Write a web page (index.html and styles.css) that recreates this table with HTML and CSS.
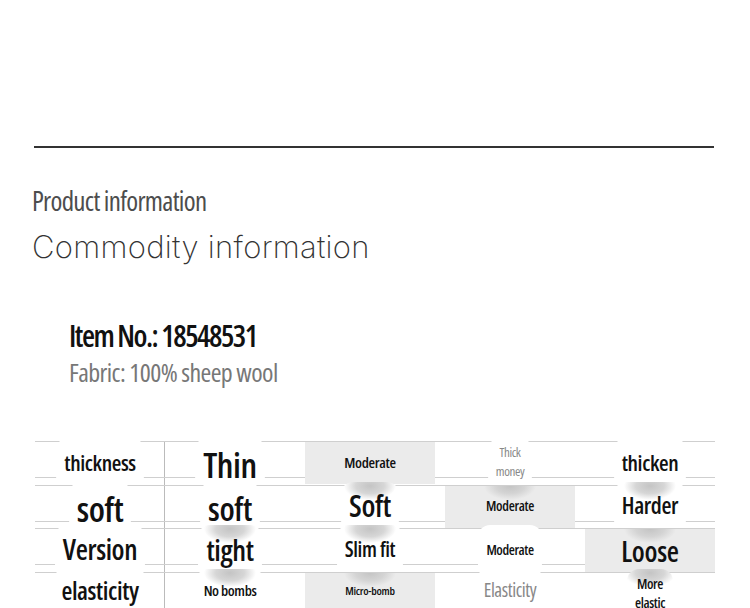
FILE: index.html
```html
<!DOCTYPE html>
<html>
<head>
<meta charset="utf-8">
<link rel="stylesheet" href="styles.css">
</head>
<body>
<div class="page">
  <div class="rule"></div>
  <div class="sub">Product information</div>
  <div class="title">Commodity information</div>
  <div class="meta">
    <div class="item">Item No.: 18548531</div>
    <div class="fabric">Fabric: 100% sheep wool</div>
  </div>
  <div class="table">
    <div class="row">
      <div class="cell"><span class="t s22">thickness</span></div>
      <div class="cell"><span class="t s35 low2">Thin</span></div>
      <div class="cell"><div class="box gray"><span class="s15">Moderate</span></div></div>
      <div class="cell"><span class="t s13 grey two">Thick<br>money</span></div>
      <div class="cell"><span class="t s22">thicken</span></div>
    </div>
    <div class="row">
      <div class="cell"><span class="t s35 low2">soft</span></div>
      <div class="cell"><span class="t s33 low2">soft</span></div>
      <div class="cell"><span class="t s30 v">Soft</span></div>
      <div class="cell"><div class="box gray v"><span class="s14">Moderate</span></div></div>
      <div class="cell"><span class="t s23 v">Harder</span></div>
    </div>
    <div class="row">
      <div class="cell"><span class="t s28">Version</span></div>
      <div class="cell"><span class="t s29 v">tight</span></div>
      <div class="cell"><span class="t s21 v">Slim fit</span></div>
      <div class="cell"><span class="t s14">Moderate</span></div>
      <div class="cell"><div class="box gray v"><span class="s28 low2">Loose</span></div></div>
    </div>
    <div class="row">
      <div class="cell"><span class="t s25">elasticity</span></div>
      <div class="cell"><span class="t s15 v">No bombs</span></div>
      <div class="cell"><div class="box gray v"><span class="s115">Micro-bomb</span></div></div>
      <div class="cell"><span class="t s19 grey">Elasticity</span></div>
      <div class="cell"><span class="t s14 two top v">More<br>elastic</span></div>
    </div>
  </div>
</div>
</body>
</html>
```

FILE: styles.css
```css
html, body {
  margin: 0;
  padding: 0;
  background: #fff;
}
.page {
  width: 750px;
  height: 608px;
  overflow: hidden;
  padding-top: 146px;
  box-sizing: border-box;
  font-family: "Open Sans", Roboto, sans-serif;
  font-stretch: 75%;
  font-weight: 500;
}
.rule {
  margin-left: 34px;
  width: 680px;
  height: 2px;
  background: #333;
}
.sub {
  margin: 38px 0 0 32px;
  font-size: 27px;
  line-height: 30px;
  color: #4d4d4d;
  font-weight: 500;
  letter-spacing: -0.7px;
}
.title {
  margin: 11px 0 0 32px;
  font-family: Inter, "Open Sans", sans-serif;
  font-stretch: 100%;
  font-weight: 250;
  font-size: 31px;
  line-height: 40px;
  color: #333;
  letter-spacing: 0.3px;
}
.meta {
  margin: 52px 0 0 69px;
}
.item {
  font-size: 30px;
  line-height: 34px;
  color: #111;
  font-weight: 600;
  letter-spacing: -1.5px;
}
.fabric {
  margin-top: 2px;
  font-size: 26px;
  line-height: 34px;
  color: #777;
  letter-spacing: -0.6px;
}
.table {
  margin: 52px 0 0 35px;
  width: 680px;
  display: flex;
  flex-direction: column;
  gap: 6.5px;
  background-image: linear-gradient(#bbb, #bbb);
  background-size: 1px 100%;
  background-position: 129px 0;
  background-repeat: no-repeat;
  padding-bottom: 10px;
}
.row {
  display: grid;
  grid-template-columns: 130px 140px 140px 140px 130px;
  height: 37px;
  box-sizing: border-box;
  border-top: 1px solid #cfcfcf;
  border-bottom: 1px solid #cfcfcf;
}
.cell {
  width: 130px;
  display: flex;
  justify-content: center;
  align-items: stretch;
  color: #111;
  font-weight: 600;
}
.t {
  display: flex;
  align-items: center;
  justify-content: center;
  text-align: center;
  background: #fff;
  margin: -4px 0;
  padding: 0 8px 3px;
  border-radius: 12px;
  white-space: nowrap;
  letter-spacing: -0.4px;
}
.box {
  width: 130px;
  display: flex;
  align-items: center;
  justify-content: center;
  padding-bottom: 2px;
  box-sizing: border-box;
  letter-spacing: -0.3px;
}
.gray {
  background: #ebebeb;
}
.t.v {
  background: radial-gradient(ellipse 26px 14px at 50% 4px, #c4c4c4 0%, #d6d6d6 55%, rgba(255,255,255,0) 100%) no-repeat, #fff;
}
.box.v {
  background: radial-gradient(ellipse 26px 14px at 50% 0, #c4c4c4 0%, #d4d4d4 55%, rgba(235,235,235,0) 100%) no-repeat, #ebebeb;
}
.grey { color: #888; font-weight: 500; }
.two { line-height: 19px; }
.t.top { align-items: flex-start; padding-top: 5px; }
.t.low2, .low2 { padding-top: 3px; padding-bottom: 0; }
.s115 { font-size: 11.5px; }
.s13 { font-size: 13px; }
.s14 { font-size: 14px; }
.s15 { font-size: 15px; }
.s19 { font-size: 19px; }
.s21 { font-size: 21px; }
.s22 { font-size: 22px; }
.s23 { font-size: 23px; }
.s25 { font-size: 25px; }
.s28 { font-size: 28px; }
.s29 { font-size: 29px; }
.s30 { font-size: 30px; }
.s33 { font-size: 33px; }
.s35 { font-size: 35px; }
```
